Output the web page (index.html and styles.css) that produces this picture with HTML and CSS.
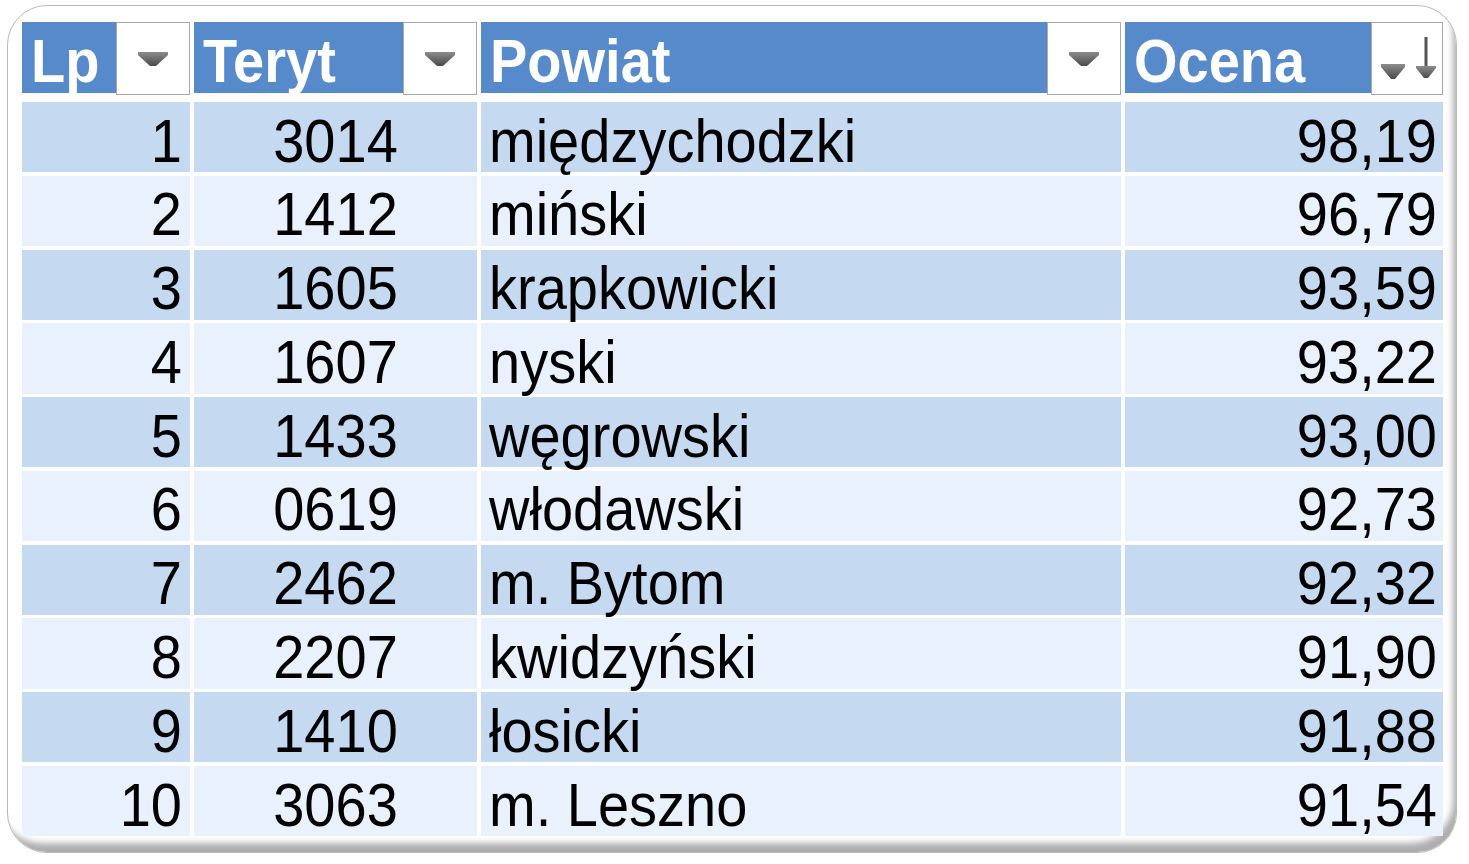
FILE: index.html
```html
<!DOCTYPE html>
<html lang="pl">
<head>
<meta charset="utf-8">
<title>Ranking powiatów</title>
<link rel="stylesheet" href="styles.css">
</head>
<body>
<div class="frame">
  <div class="table">
    <div class="head">
      <div class="hcell">
        <div class="htitle"><span class="txt">Lp</span></div>
        <div class="fbtn"><svg class="tri" width="30" height="14" viewBox="0 0 30 14"><defs><linearGradient id="g1" x1="0" y1="0" x2="0" y2="1"><stop offset="0" stop-color="#8c8c8c"/><stop offset="1" stop-color="#4a4a4a"/></linearGradient></defs><polygon points="0,0 30,0 30,3 18,14 12,14 0,3" fill="url(#g1)"/></svg></div>
      </div>
      <div class="hcell">
        <div class="htitle"><span class="txt">Teryt</span></div>
        <div class="fbtn"><svg class="tri" width="30" height="14" viewBox="0 0 30 14"><polygon points="0,0 30,0 30,3 18,14 12,14 0,3" fill="url(#g1)"/></svg></div>
      </div>
      <div class="hcell">
        <div class="htitle"><span class="txt">Powiat</span></div>
        <div class="fbtn"><svg class="tri" width="30" height="14" viewBox="0 0 30 14"><polygon points="0,0 30,0 30,3 18,14 12,14 0,3" fill="url(#g1)"/></svg></div>
      </div>
      <div class="hcell">
        <div class="htitle"><span class="txt">Ocena</span></div>
        <div class="fbtn sortbtn"><svg class="sorticon" width="72" height="73" viewBox="0 0 72 73"><polygon points="10,42 34,42 34,45 24,57 20,57 10,45" fill="url(#g1)"/><rect x="53.5" y="15" width="3" height="38" fill="#555"/><polygon points="45,44 65,44 65,46 57,56 53,56 45,46" fill="url(#g1)"/></svg></div>
      </div>
    </div>
    <div class="body">
      <div class="row dark"><div class="c c1"><span class="txt">1</span></div><div class="c c2"><span class="txt">3014</span></div><div class="c c3"><span class="txt">międzychodzki</span></div><div class="c c4"><span class="txt">98,19</span></div></div>
      <div class="row light"><div class="c c1"><span class="txt">2</span></div><div class="c c2"><span class="txt">1412</span></div><div class="c c3"><span class="txt">miński</span></div><div class="c c4"><span class="txt">96,79</span></div></div>
      <div class="row dark"><div class="c c1"><span class="txt">3</span></div><div class="c c2"><span class="txt">1605</span></div><div class="c c3"><span class="txt">krapkowicki</span></div><div class="c c4"><span class="txt">93,59</span></div></div>
      <div class="row light"><div class="c c1"><span class="txt">4</span></div><div class="c c2"><span class="txt">1607</span></div><div class="c c3"><span class="txt">nyski</span></div><div class="c c4"><span class="txt">93,22</span></div></div>
      <div class="row dark"><div class="c c1"><span class="txt">5</span></div><div class="c c2"><span class="txt">1433</span></div><div class="c c3"><span class="txt">węgrowski</span></div><div class="c c4"><span class="txt">93,00</span></div></div>
      <div class="row light"><div class="c c1"><span class="txt">6</span></div><div class="c c2"><span class="txt">0619</span></div><div class="c c3"><span class="txt">włodawski</span></div><div class="c c4"><span class="txt">92,73</span></div></div>
      <div class="row dark"><div class="c c1"><span class="txt">7</span></div><div class="c c2"><span class="txt">2462</span></div><div class="c c3"><span class="txt">m. Bytom</span></div><div class="c c4"><span class="txt">92,32</span></div></div>
      <div class="row light"><div class="c c1"><span class="txt">8</span></div><div class="c c2"><span class="txt">2207</span></div><div class="c c3"><span class="txt">kwidzyński</span></div><div class="c c4"><span class="txt">91,90</span></div></div>
      <div class="row dark"><div class="c c1"><span class="txt">9</span></div><div class="c c2"><span class="txt">1410</span></div><div class="c c3"><span class="txt">łosicki</span></div><div class="c c4"><span class="txt">91,88</span></div></div>
      <div class="row light"><div class="c c1"><span class="txt">10</span></div><div class="c c2"><span class="txt">3063</span></div><div class="c c3"><span class="txt">m. Leszno</span></div><div class="c c4"><span class="txt">91,54</span></div></div>
    </div>
  </div>
</div>
</body>
</html>
```
FILE: styles.css
```css
html, body {
  margin: 0;
  padding: 0;
  background: #ffffff;
}

body {
  font-family: "Liberation Sans", Arial, sans-serif;
}

.frame {
  box-sizing: border-box;
  margin: 5px 0 0 7px;
  width: 1450px;
  height: 848px;
  padding: 16px 0 0 14px;
  background: #ffffff;
  border: 1px solid #b9b9b9;
  border-radius: 40px;
  box-shadow: inset -6px -12px 6px -3px rgba(0, 0, 0, 0.32);
}

.table {
  width: 1421px;
}

.head,
.row {
  display: grid;
  grid-template-columns: 168px 283px 640px 318px;
  column-gap: 4px;
}

.head {
  height: 73px;
}

.hcell {
  display: flex;
  height: 73px;
}

.htitle {
  flex: 1;
  min-width: 0;
  background: #568acb;
  color: #ffffff;
  font-weight: bold;
  font-size: 56px;
  line-height: 56px;
  padding: 13px 0 0 9px;
  height: 71px;
  box-sizing: border-box;
  white-space: nowrap;
}

.fbtn {
  box-sizing: border-box;
  flex: none;
  width: 74px;
  height: 73px;
  background: #ffffff;
  border: 1px solid #a9a9a9;
  display: flex;
  align-items: center;
  justify-content: center;
}

.sortbtn {
  width: 72px;
  position: relative;
}

.sorticon {
  position: absolute;
  left: -1px;
  top: -1px;
}

.body {
  margin-top: 7px;
  display: flex;
  flex-direction: column;
  row-gap: 3.6px;
}

.row {
  height: 70.2px;
}

.c {
  box-sizing: border-box;
  font-size: 56px;
  line-height: 56px;
  color: #000000;
  padding-top: 12.5px;
  display: flex;
  white-space: nowrap;
}

.dark .c {
  background: #c5d9f1;
}

.light .c {
  background: #e9f2fc;
}

.c1 {
  justify-content: flex-end;
  padding-right: 8px;
}

.c2 {
  justify-content: center;
}

.c3 {
  justify-content: flex-start;
  padding-left: 8px;
}

.c4 {
  justify-content: flex-end;
  padding-right: 6px;
}

.txt {
  display: inline-block;
  transform: scaleY(1.075);
  transform-origin: 50% 46px;
}
```
